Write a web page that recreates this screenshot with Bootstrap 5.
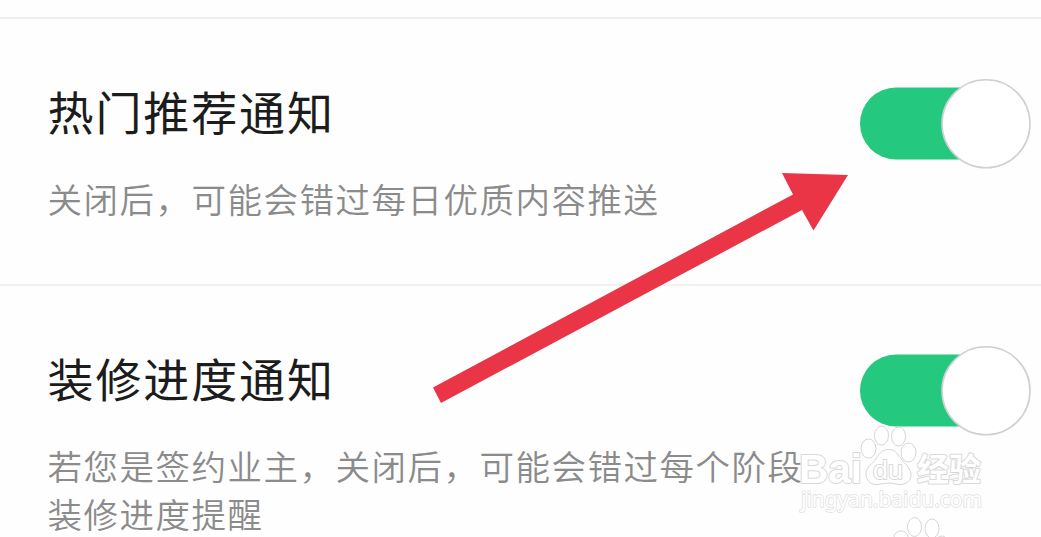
<!DOCTYPE html>
<html lang="zh-CN">

<head>
    <meta charset="UTF-8">
    <meta name="viewport" content="width=device-width, initial-scale=1.0">
    <title>通知设置</title>

    <link href="https://cdn.jsdelivr.net/npm/bootstrap@5.3.3/dist/css/bootstrap.min.css" rel="stylesheet">
    <script src="https://cdn.jsdelivr.net/npm/bootstrap@5.3.3/dist/js/bootstrap.bundle.min.js"></script>

    <style>
        body {
            height: 537px;
            background: #fefefe;
            font-family: "Noto Sans CJK SC", "Noto Sans", sans-serif;
        }

        .notice-list {
            padding-top: 17px;
        }

        .notice-item {
            height: 267px;
            border-top: 2px solid #eeeeef;
            padding: 60px 10px 0 47.5px;
        }

        .notice-item + .notice-item {
            border-top-color: #f1f1f2;
        }

        .notice-title {
            margin-top: -4px;
            font-size: 46px;
            line-height: 70px;
            letter-spacing: 1.9px;
            font-weight: 400;
            color: #1c1c1c;
        }

        .notice-text {
            width: 770px;
            margin-top: 29px;
            font-size: 34.5px;
            line-height: 48px;
            letter-spacing: 1.5px;
            font-weight: 350;
            color: #8b8b8b;
        }

        .notice-switch {
            width: 171px;
            height: 90px;
        }

        .overlay {
            width: 1041px;
            height: 537px;
            pointer-events: none;
        }
    </style>
</head>

<body class="position-relative overflow-hidden">

    <div class="notice-list">
        <div class="notice-item d-flex justify-content-between align-items-start">
            <div class="flex-shrink-0">
                <h4 class="notice-title mb-0">热门推荐通知</h4>
                <p class="notice-text mb-0">关闭后，可能会错过每日优质内容推送</p>
            </div>
            <svg class="notice-switch flex-shrink-0" viewBox="0 0 171 90" role="switch" aria-checked="true">
                <rect x="0" y="8.5" width="150" height="72" rx="36" fill="#25c87f" />
                <circle cx="126" cy="44.8" r="44" fill="#fff" stroke="#d0d0d0" stroke-width="1.6" />
            </svg>
        </div>
        <div class="notice-item d-flex justify-content-between align-items-start">
            <div class="flex-shrink-0">
                <h4 class="notice-title mb-0">装修进度通知</h4>
                <p class="notice-text mb-0">若您是签约业主，关闭后，可能会错过每个阶段<br>装修进度提醒</p>
            </div>
            <svg class="notice-switch flex-shrink-0" viewBox="0 0 171 90" role="switch" aria-checked="true">
                <rect x="0" y="8.5" width="150" height="72" rx="36" fill="#25c87f" />
                <circle cx="126" cy="44.8" r="44" fill="#fff" stroke="#d0d0d0" stroke-width="1.6" />
            </svg>
        </div>
    </div>

    <!-- arrow and watermark lie over the list -->
    <svg class="overlay position-absolute top-0 start-0" viewBox="0 0 1041 537">
        <path d="M433 387.500L793 194.500L782 173L848 175L813.500 230.500L802 210L441 403Z" fill="#e93546" />

        <g fill="#fff" stroke="#d6d6d6" stroke-width="1">
            <ellipse cx="868.5" cy="448.5" rx="7.5" ry="9.5" />
            <ellipse cx="881.5" cy="435.5" rx="7" ry="9.5" />
            <ellipse cx="898.5" cy="436.5" rx="7" ry="9.5" />
            <ellipse cx="908.5" cy="452.5" rx="7.5" ry="9.5" />
            <path d="M888.500 449.500C896 449.500 898 455 902 460C907 466 911 469 911 475C911 481 906 484.500 900 484.500C895 484.500 893 483 888.500 483C884 483 881 484.500 876 484.500C870 484.500 866 480 866 474C866 468 871 465 875 460C879 455 881 449.500 888.500 449.500Z" />
            <ellipse cx="901" cy="537" rx="7" ry="6" />
            <ellipse cx="914.5" cy="527" rx="7" ry="9.5" />
            <ellipse cx="932" cy="528.5" rx="7" ry="9.5" />
            <path d="M937 538Q943 534 946 538" />
        </g>
        <g fill="#fff" stroke="#d9d9d9" stroke-width="2" stroke-linejoin="round" paint-order="stroke" font-family="Liberation Sans, sans-serif">
            <text x="799" y="482.500" font-size="41" font-weight="700" textLength="63" lengthAdjust="spacingAndGlyphs">Bai</text>
            <text x="873" y="479" font-size="26" textLength="30" lengthAdjust="spacingAndGlyphs">du</text>
            <text x="917" y="481" font-size="32" font-weight="700" font-family="Noto Sans CJK SC, sans-serif">经验</text>
            <text x="801" y="507" font-size="21" stroke="#e0e0e0" stroke-width="1.500" font-family="Noto Sans, sans-serif" textLength="181" lengthAdjust="spacingAndGlyphs">jingyan.baidu.com</text>
        </g>
    </svg>

</body>

</html>
